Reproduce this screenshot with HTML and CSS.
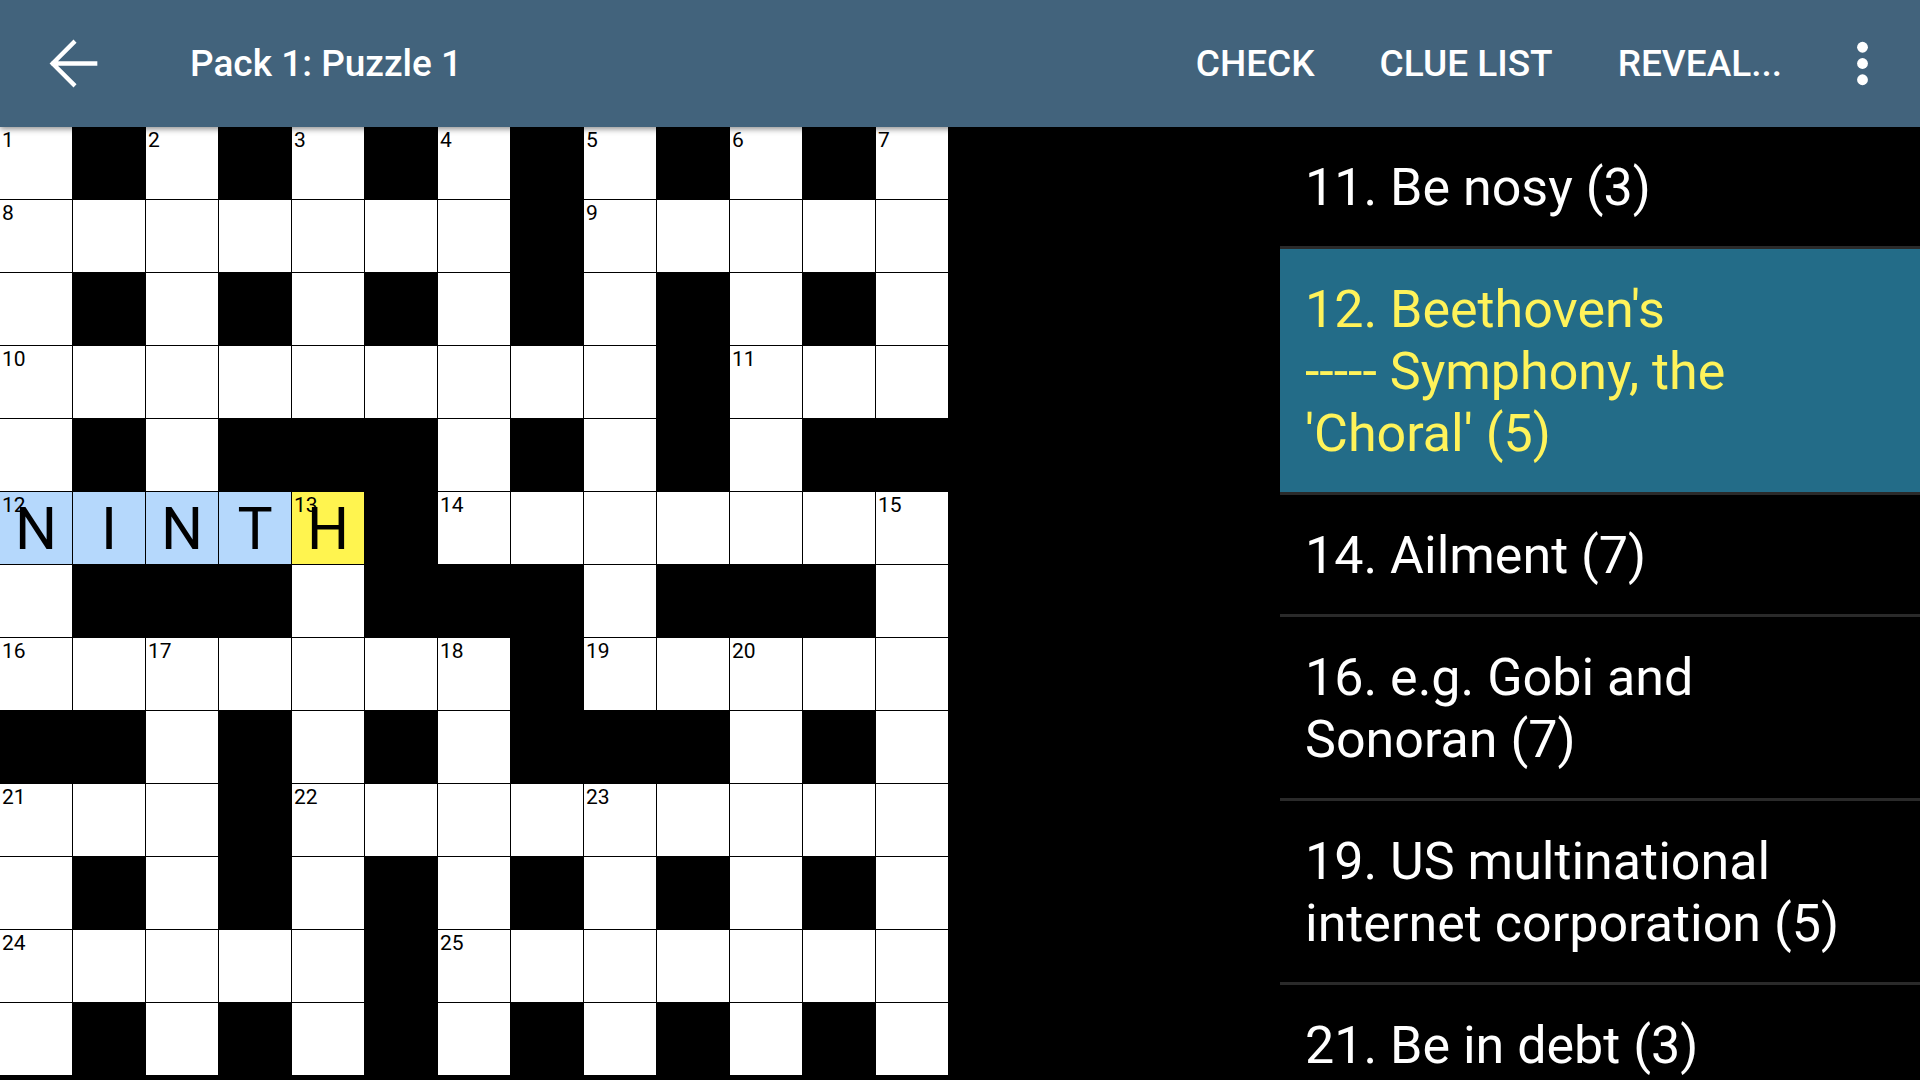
FILE: index.html
```html
<!DOCTYPE html>
<html lang="en">
<head>
<meta charset="utf-8">
<title>Pack 1: Puzzle 1</title>
<link rel="stylesheet" href="styles.css">
</head>
<body>
<div class="app">
  <header class="topbar">
    <button class="icon-btn back" aria-label="Back">
      <svg viewBox="0 0 24 24" width="65" height="65"><path d="M20 12H4.6M12 4.3L4.3 12l7.7 7.7" fill="none" stroke="#fff" stroke-width="1.6" stroke-linecap="square"/></svg>
    </button>
    <h1 class="title">Pack 1: Puzzle 1</h1>
    <nav class="actions">
      <span class="action">CHECK</span>
      <span class="action">CLUE LIST</span>
      <span class="action">REVEAL...</span>
    </nav>
    <button class="icon-btn more" aria-label="More">
      <svg viewBox="0 0 24 24" width="65" height="65"><circle cx="12" cy="6" r="2" fill="#fff"/><circle cx="12" cy="12" r="2" fill="#fff"/><circle cx="12" cy="18" r="2" fill="#fff"/></svg>
    </button>
  </header>
  <main class="body">
    <div class="grid">
      <!-- row 0 -->
      <div class="c"><span class="n">1</span></div><div class="b"></div><div class="c"><span class="n">2</span></div><div class="b"></div><div class="c"><span class="n">3</span></div><div class="b"></div><div class="c"><span class="n">4</span></div><div class="b"></div><div class="c"><span class="n">5</span></div><div class="b"></div><div class="c"><span class="n">6</span></div><div class="b"></div><div class="c"><span class="n">7</span></div>
      <!-- row 1 -->
      <div class="c"><span class="n">8</span></div><div class="c"></div><div class="c"></div><div class="c"></div><div class="c"></div><div class="c"></div><div class="c"></div><div class="b"></div><div class="c"><span class="n">9</span></div><div class="c"></div><div class="c"></div><div class="c"></div><div class="c"></div>
      <!-- row 2 -->
      <div class="c"></div><div class="b"></div><div class="c"></div><div class="b"></div><div class="c"></div><div class="b"></div><div class="c"></div><div class="b"></div><div class="c"></div><div class="b"></div><div class="c"></div><div class="b"></div><div class="c"></div>
      <!-- row 3 -->
      <div class="c"><span class="n">10</span></div><div class="c"></div><div class="c"></div><div class="c"></div><div class="c"></div><div class="c"></div><div class="c"></div><div class="c"></div><div class="c"></div><div class="b"></div><div class="c"><span class="n">11</span></div><div class="c"></div><div class="c"></div>
      <!-- row 4 -->
      <div class="c"></div><div class="b"></div><div class="c"></div><div class="b"></div><div class="b"></div><div class="b"></div><div class="c"></div><div class="b"></div><div class="c"></div><div class="b"></div><div class="c"></div><div class="b"></div><div class="b"></div>
      <!-- row 5 -->
      <div class="c hl"><span class="n">12</span><span class="l">N</span></div><div class="c hl"><span class="l">I</span></div><div class="c hl"><span class="l">N</span></div><div class="c hl"><span class="l">T</span></div><div class="c cur"><span class="n">13</span><span class="l">H</span></div><div class="b"></div><div class="c"><span class="n">14</span></div><div class="c"></div><div class="c"></div><div class="c"></div><div class="c"></div><div class="c"></div><div class="c"><span class="n">15</span></div>
      <!-- row 6 -->
      <div class="c"></div><div class="b"></div><div class="b"></div><div class="b"></div><div class="c"></div><div class="b"></div><div class="b"></div><div class="b"></div><div class="c"></div><div class="b"></div><div class="b"></div><div class="b"></div><div class="c"></div>
      <!-- row 7 -->
      <div class="c"><span class="n">16</span></div><div class="c"></div><div class="c"><span class="n">17</span></div><div class="c"></div><div class="c"></div><div class="c"></div><div class="c"><span class="n">18</span></div><div class="b"></div><div class="c"><span class="n">19</span></div><div class="c"></div><div class="c"><span class="n">20</span></div><div class="c"></div><div class="c"></div>
      <!-- row 8 -->
      <div class="b"></div><div class="b"></div><div class="c"></div><div class="b"></div><div class="c"></div><div class="b"></div><div class="c"></div><div class="b"></div><div class="b"></div><div class="b"></div><div class="c"></div><div class="b"></div><div class="c"></div>
      <!-- row 9 -->
      <div class="c"><span class="n">21</span></div><div class="c"></div><div class="c"></div><div class="b"></div><div class="c"><span class="n">22</span></div><div class="c"></div><div class="c"></div><div class="c"></div><div class="c"><span class="n">23</span></div><div class="c"></div><div class="c"></div><div class="c"></div><div class="c"></div>
      <!-- row 10 -->
      <div class="c"></div><div class="b"></div><div class="c"></div><div class="b"></div><div class="c"></div><div class="b"></div><div class="c"></div><div class="b"></div><div class="c"></div><div class="b"></div><div class="c"></div><div class="b"></div><div class="c"></div>
      <!-- row 11 -->
      <div class="c"><span class="n">24</span></div><div class="c"></div><div class="c"></div><div class="c"></div><div class="c"></div><div class="b"></div><div class="c"><span class="n">25</span></div><div class="c"></div><div class="c"></div><div class="c"></div><div class="c"></div><div class="c"></div><div class="c"></div>
      <!-- row 12 -->
      <div class="c"></div><div class="b"></div><div class="c"></div><div class="b"></div><div class="c"></div><div class="b"></div><div class="c"></div><div class="b"></div><div class="c"></div><div class="b"></div><div class="c"></div><div class="b"></div><div class="c"></div>
    </div>
    <div class="spacer"></div>
    <ul class="clues">
      <li class="clue">11. Be nosy (3)</li>
      <li class="clue active">12. Beethoven's<br>----- Symphony, the<br>'Choral' (5)</li>
      <li class="clue">14. Ailment (7)</li>
      <li class="clue">16. e.g. Gobi and<br>Sonoran (7)</li>
      <li class="clue">19. US multinational<br>internet corporation (5)</li>
      <li class="clue">21. Be in debt (3)</li>
    </ul>
  </main>
</div>
</body>
</html>
```

FILE: styles.css
```css
* { box-sizing: border-box; }
html, body {
  margin: 0;
  padding: 0;
  background: #000;
  width: 1920px;
  height: 1080px;
  overflow: hidden;
  font-family: Roboto, "Liberation Sans", sans-serif;
}
.app {
  display: flex;
  flex-direction: column;
  height: 1080px;
}
.topbar {
  position: relative;
  z-index: 2;
  height: 127px;
  flex: none;
  background: #42637c;
  display: flex;
  align-items: center;
  color: #fff;
  box-shadow: 0 2px 6px rgba(0,0,0,0.45);
}
.icon-btn {
  background: none;
  border: 0;
  padding: 0;
  margin: 0;
  width: 65px;
  height: 65px;
  display: flex;
}
.back { margin-left: 41px; }
.title {
  margin: 0 0 0 84px;
  font-size: 37px;
  font-weight: 500;
  letter-spacing: 0;
  flex: 1;
}
.actions {
  display: flex;
  gap: 65px;
  font-size: 37px;
  font-weight: 500;
  letter-spacing: 0;
}
.more { margin: 0 25px 0 48px; }
.body {
  flex: 1;
  display: flex;
  min-height: 0;
  overflow: hidden;
}
.grid {
  flex: none;
  display: grid;
  grid-template-columns: repeat(13, 72px);
  grid-auto-rows: 72px;
  gap: 1px;
  width: 949px;
  align-self: flex-start;
  background: #000;
  border-right: 1px solid #000;
  border-bottom: 1px solid #000;
}
.c {
  position: relative;
  background: #fff;
  display: flex;
  align-items: center;
  justify-content: center;
}
.b { background: #000; }
.hl { background: #b5d8fc; }
.cur { background: #fff44f; }
.n {
  position: absolute;
  top: 0;
  left: 2px;
  font-size: 21px;
  line-height: 26px;
  color: #000;
}
.l {
  font-size: 59px;
  line-height: 1;
  color: #000;
}
.spacer { flex: 1; }
.clues {
  flex: none;
  width: 640px;
  margin: 0;
  padding: 0;
  list-style: none;
}
.clue {
  padding: 30px 20px 27px 25px;
  font-size: 52px;
  line-height: 62px;
  color: #fff;
  border-bottom: 3px solid #2a2a2a;
  white-space: nowrap;
}
.clue.active {
  background: #236c88;
  color: #fff35a;
}
```
